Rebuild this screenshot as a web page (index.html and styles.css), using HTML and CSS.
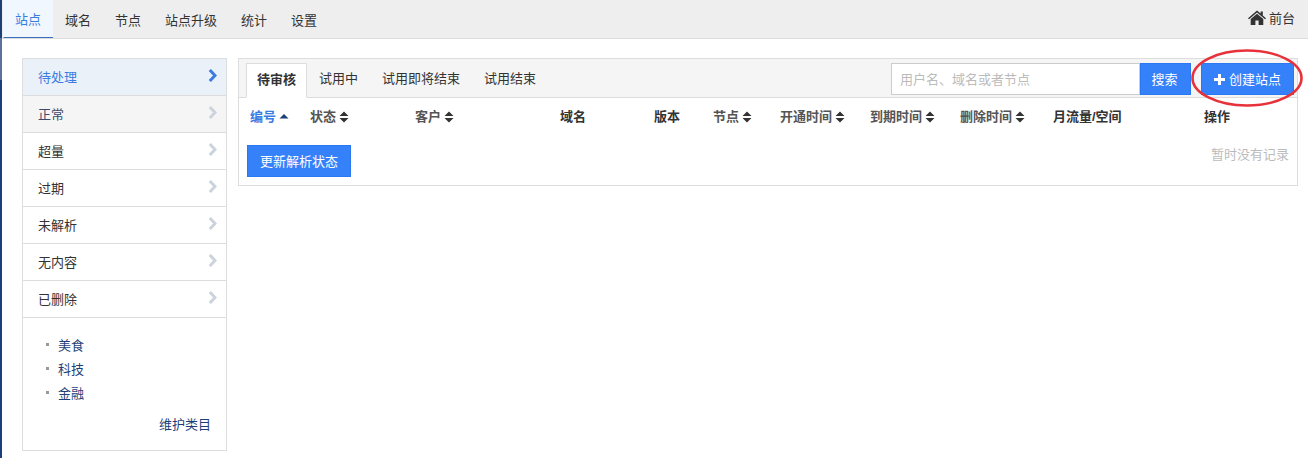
FILE: index.html
```html
<!DOCTYPE html>
<html lang="zh">
<head>
<meta charset="utf-8">
<title>站点</title>
<link rel="stylesheet" href="styles.css">
</head>
<body>
<div class="edge"></div>
<div class="page">
  <nav class="topnav">
    <a class="topitem active">站点</a>
    <a class="topitem">域名</a>
    <a class="topitem">节点</a>
    <a class="topitem">站点升级</a>
    <a class="topitem">统计</a>
    <a class="topitem">设置</a>
    <a class="home">
      <svg class="homeicon" viewBox="0 0 18 15"><path d="M9 0.4 L12.6 3.6 V1.5 H14.8 V5.5 L18 8.3 L17 9.3 L9 2.4 L1 9.3 L0 8.3 Z M9 3.7 L15.3 9.1 V15 H10.6 V10.5 H7.4 V15 H2.7 V9.1 Z"/></svg>
      前台
    </a>
  </nav>
  <div class="content">
    <aside class="side">
      <a class="sideitem current">待处理<svg class="chev" viewBox="0 0 9 13"><path d="M1.8 1 L7 6.5 L1.8 12"/></svg></a>
      <a class="sideitem muted">正常<svg class="chev" viewBox="0 0 9 13"><path d="M1.8 1 L7 6.5 L1.8 12"/></svg></a>
      <a class="sideitem">超量<svg class="chev" viewBox="0 0 9 13"><path d="M1.8 1 L7 6.5 L1.8 12"/></svg></a>
      <a class="sideitem">过期<svg class="chev" viewBox="0 0 9 13"><path d="M1.8 1 L7 6.5 L1.8 12"/></svg></a>
      <a class="sideitem">未解析<svg class="chev" viewBox="0 0 9 13"><path d="M1.8 1 L7 6.5 L1.8 12"/></svg></a>
      <a class="sideitem">无内容<svg class="chev" viewBox="0 0 9 13"><path d="M1.8 1 L7 6.5 L1.8 12"/></svg></a>
      <a class="sideitem">已删除<svg class="chev" viewBox="0 0 9 13"><path d="M1.8 1 L7 6.5 L1.8 12"/></svg></a>
      <div class="cats">
        <ul class="catlist">
          <li>美食</li>
          <li>科技</li>
          <li>金融</li>
        </ul>
        <a class="maintain">维护类目</a>
      </div>
    </aside>
    <main class="panel">
      <div class="panelhead">
        <div class="tabs">
          <a class="tab active">待审核</a>
          <a class="tab">试用中</a>
          <a class="tab">试用即将结束</a>
          <a class="tab">试用结束</a>
        </div>
        <div class="tools">
          <input class="search" type="text" placeholder="用户名、域名或者节点">
          <button class="btn searchbtn">搜索</button>
          <span class="createwrap">
            <button class="btn createbtn"><svg class="plus" viewBox="0 0 11 11"><path d="M4 0 H7 V4 H11 V7 H7 V11 H4 V7 H0 V4 H4 Z"/></svg>创建站点</button>
            <svg class="ring" viewBox="0 0 112 60"><ellipse cx="56" cy="30" rx="54.5" ry="27.5"/></svg>
          </span>
        </div>
      </div>
      <div class="tablehead">
        <span class="th c1 sorted">编号<svg class="sort" viewBox="0 0 10 12"><path class="on" d="M5 3 L9.5 7.5 H0.5 Z"/></svg></span>
        <span class="th c2">状态<svg class="sort" viewBox="0 0 10 12"><path d="M5 0.5 L9.5 5 H0.5 Z M0.5 7 H9.5 L5 11.5 Z"/></svg></span>
        <span class="th c3">客户<svg class="sort" viewBox="0 0 10 12"><path d="M5 0.5 L9.5 5 H0.5 Z M0.5 7 H9.5 L5 11.5 Z"/></svg></span>
        <span class="th c4 plain">域名</span>
        <span class="th c5 plain">版本</span>
        <span class="th c6">节点<svg class="sort" viewBox="0 0 10 12"><path d="M5 0.5 L9.5 5 H0.5 Z M0.5 7 H9.5 L5 11.5 Z"/></svg></span>
        <span class="th c7">开通时间<svg class="sort" viewBox="0 0 10 12"><path d="M5 0.5 L9.5 5 H0.5 Z M0.5 7 H9.5 L5 11.5 Z"/></svg></span>
        <span class="th c8">到期时间<svg class="sort" viewBox="0 0 10 12"><path d="M5 0.5 L9.5 5 H0.5 Z M0.5 7 H9.5 L5 11.5 Z"/></svg></span>
        <span class="th c9">删除时间<svg class="sort" viewBox="0 0 10 12"><path d="M5 0.5 L9.5 5 H0.5 Z M0.5 7 H9.5 L5 11.5 Z"/></svg></span>
        <span class="th c10 plain">月流量/空间</span>
        <span class="th c11 plain">操作</span>
      </div>
      <div class="tablefoot">
        <button class="btn refresh">更新解析状态</button>
        <span class="empty">暂时没有记录</span>
      </div>
    </main>
  </div>
</div>
</body>
</html>
```
FILE: styles.css
```css
* { box-sizing: border-box; }
html, body { margin: 0; padding: 0; height: 458px; overflow: hidden; background: #fff; }
body {
  display: flex;
  font-family: "Liberation Sans", "Noto Sans CJK SC", sans-serif;
  font-size: 13px;
  color: #333;
}
.edge {
  width: 2px;
  flex: none;
  background: linear-gradient(#1d3f78 0 38px, #5a7299 38px 80px, #1d3f78 80px);
}
.page { flex: 1; min-width: 0; }

.topnav {
  height: 39px;
  display: flex;
  align-items: stretch;
  padding-left: 1px;
  background: #eee;
  border-bottom: 1px solid #ddd;
}
.topitem {
  display: flex;
  align-items: center;
  padding: 0 12px;
  height: 38px;
  color: #333;
}
.topitem.active {
  padding-left: 11px;
  color: #3a7ce0;
  background: #f1f7fe;
  border-left: 1px solid #f1f7fe;
  border-bottom: 1px solid #3a6cc0;
}
.home {
  margin-left: auto;
  padding: 0 13px 3px 0;
  display: flex;
  align-items: center;
  gap: 3px;
  color: #333;
}
.homeicon { width: 18px; height: 15px; fill: #333; margin-top: -1px; }

.content {
  display: flex;
  align-items: flex-start;
  padding: 19px 10px 0 20px;
  gap: 11px;
}
.side {
  width: 205px;
  flex: none;
  height: 393px;
  border: 1px solid #ddd;
}
.sideitem {
  display: flex;
  align-items: center;
  justify-content: space-between;
  height: 37px;
  padding: 0 9px 2px 15px;
  border-bottom: 1px solid #ddd;
  color: #333;
}
.sideitem.current { background: #ebf1f9; color: #3a7ce0; }
.sideitem.muted { background: #f5f5f5; color: #3b4a6b; }
.chev { width: 9px; height: 13px; fill: none; stroke: #ccd3dc; stroke-width: 3; margin-top: -2px; }
.current .chev { stroke: #3a7ce0; }

.cats { padding: 14px 15px 0 23px; }
.catlist { margin: 0; padding: 0; list-style: none; }
.catlist li {
  display: flex;
  align-items: center;
  height: 24px;
  color: #1d3f78;
}
.catlist li::before {
  content: "";
  width: 3px;
  height: 3px;
  margin-right: 9px;
  background: #999;
}
.maintain { display: block; margin-top: 10px; text-align: right; color: #1d3f78; }

.panel {
  flex: 1;
  min-width: 0;
  height: 128px;
  border: 1px solid #ddd;
}
.panelhead {
  height: 39px;
  display: flex;
  justify-content: space-between;
  background: #f5f5f5;
  border-bottom: 1px solid #ddd;
}
.tabs { display: flex; padding: 4px 0 0 7px; }
.tab {
  height: 35px;
  line-height: 31px;
  padding: 0 12px;
  color: #333;
}
.tab.active {
  padding: 0 10px;
  background: #fff;
  border: 1px solid #ddd;
  border-bottom-color: #fff;
  font-weight: bold;
}
.tools { display: flex; padding: 4px 3px 0 0; align-items: flex-start; }
.search {
  width: 249px;
  height: 32px;
  padding: 0 8px;
  border: 1px solid #ccc;
  background: #fff;
  font: inherit;
  outline: none;
}
.search::placeholder { color: #bbb; opacity: 1; }
.btn {
  font: inherit;
  color: #fff;
  background: #3481fa;
  border: 1px solid #2b78f0;
  padding: 0 0 2px;
}
.searchbtn { width: 51px; height: 32px; padding-right: 2px; }
.createwrap { position: relative; margin-left: 10px; display: block; }
.createbtn { width: 93px; height: 32px; display: flex; align-items: center; justify-content: center; gap: 4px; }
.plus { width: 11px; height: 11px; fill: #fff; margin-top: 2px; }
.ring {
  position: absolute;
  left: -10px;
  top: -15px;
  width: 112px;
  height: 60px;
  fill: none;
  stroke: #e8323a;
  stroke-width: 2.6;
  pointer-events: none;
}

.tablehead { position: relative; height: 38px; }
.th {
  position: absolute;
  top: 11px;
  font-weight: bold;
  color: #555;
  display: flex;
  align-items: center;
  gap: 3px;
  line-height: 15px;
}
.th.plain { color: #333; }
.th.sorted { color: #3a7ce0; }
.sort { width: 10px; height: 12px; fill: #333; }
.sort .on { fill: #1d3f78; }
.c1 { left: 11px; }
.c2 { left: 71px; }
.c3 { left: 176px; }
.c4 { left: 321px; }
.c5 { left: 415px; }
.c6 { left: 474px; }
.c7 { left: 541px; }
.c8 { left: 631px; }
.c9 { left: 721px; }
.c10 { left: 814px; }
.c11 { left: 965px; }

.tablefoot {
  display: flex;
  justify-content: space-between;
  align-items: flex-start;
  padding: 9px 8px 0 8px;
}
.refresh { width: 104px; height: 32px; }
.empty { color: #bbb; margin-top: -1px; }
```
